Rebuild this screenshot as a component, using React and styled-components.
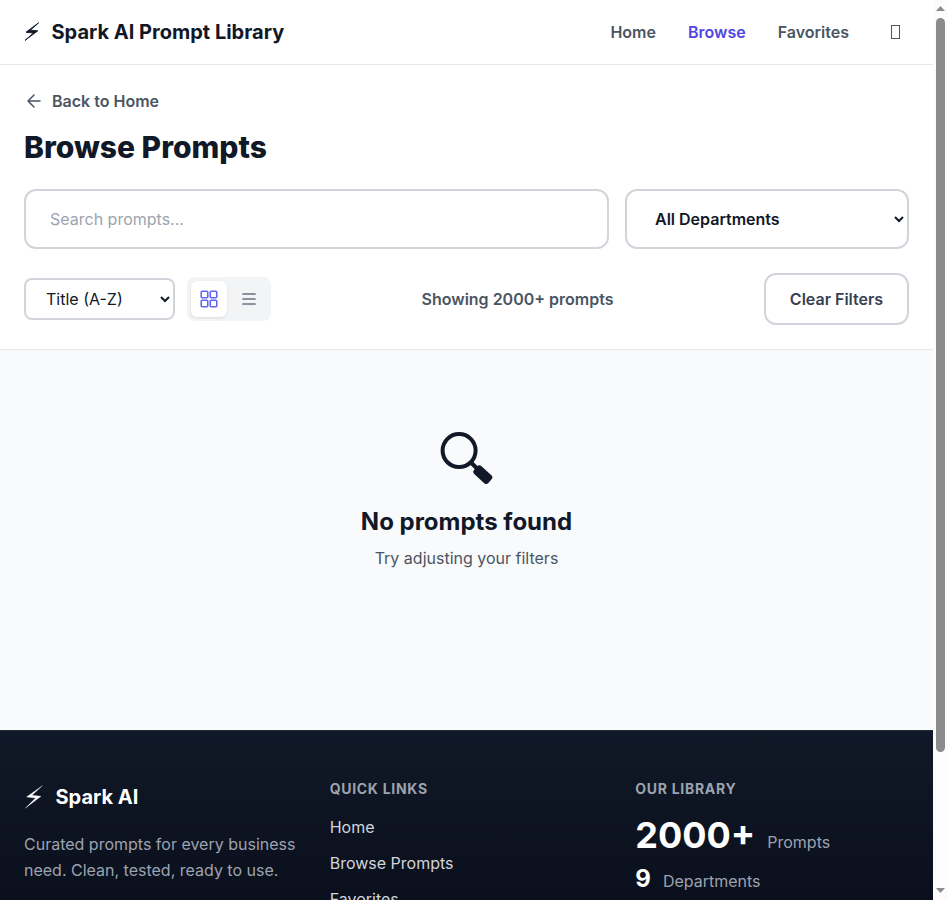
import React from 'react';
import styled, { createGlobalStyle } from 'styled-components';

const Global = createGlobalStyle`
  *, *::before, *::after { box-sizing: border-box; }
  html, body { margin: 0; padding: 0; overflow: hidden; }
  body { font-family: Inter, "Liberation Sans", sans-serif; font-size: 16px; line-height: 1.6; color: #111827; background: #f9fafb; }
  h1, h2, h3, p { margin: 0; }
  a { color: inherit; text-decoration: none; }
`;
const Viewport = styled.div`
  display: grid; grid-template-columns: 1fr 15px; height: 900px; overflow: hidden;
`;
const Page = styled.div`min-width: 0; height: 900px; overflow: hidden;`;
const Header = styled.header`
  height: 65px; padding: 0 24px; display: flex; align-items: center; justify-content: space-between;
  background: #fff; border-bottom: 1px solid #e5e7eb;
`;
const Brand = styled.a`
  display: flex; align-items: center; gap: 11.5px; font-size: 20px; font-weight: 700; line-height: 32px;
`;
const Nav = styled.nav`display: flex; align-items: center; gap: 32px;`;
const NavLink = styled.a`padding-top: 2px; font-weight: 600; color: ${p => (p.$active ? '#4f46e5' : '#4b5563')};`;
const ThemeButton = styled.button`
  width: 28px; height: 40px; padding: 0; border: 0; background: none; display: grid; place-items: center;
`;
const MissingGlyph = styled.span`width: 9px; height: 14px; border: 1px solid #4b5563;`;
const Controls = styled.section`
  height: 285px; padding: 24px 24px 0; background: #fff; border-bottom: 1px solid #e5e7eb;
`;
const BackLink = styled.a`
  display: inline-flex; align-items: center; gap: 8px; height: 26px; font-weight: 600; color: #4b5563;
  vertical-align: top;
  svg { margin-bottom: 2px; }
`;
const Title = styled.h1`
  margin-top: 14px; height: 36px; font-size: 30px; line-height: 36px; font-weight: 800;
`;
const SearchRow = styled.div`display: grid; grid-template-columns: 1fr 284px; gap: 16px; margin-top: 24px;`;
const SearchInput = styled.input`
  height: 60px; padding: 0 24px; border: 2px solid #d1d5db; border-radius: 12px; font: inherit; background: #fff;
  &::placeholder { color: #9ca3af; opacity: 1; }
`;
const Select = styled.select`
  width: ${p => p.$width}px; height: ${p => p.$height}px; padding: 0 0 0 ${p => p.$pad}px;
  border: 2px solid #d1d5db; border-radius: ${p => p.$radius}px; background: #fff; color: #111827;
  font: inherit; font-weight: ${p => p.$weight};
`;
const ToolRow = styled.div`display: flex; align-items: center; justify-content: space-between; margin-top: 24px; height: 52px;`;
const ToolGroup = styled.div`display: flex; align-items: center; gap: 12px;`;
const Toggle = styled.div`display: flex; gap: 4px; padding: 4px; border-radius: 8px; background: #f3f4f6;`;
const ToggleButton = styled.button`
  width: 36px; height: 36px; padding: 0; display: grid; place-items: center; border: 0; border-radius: 6px;
  color: ${p => (p.$active ? '#6366f1' : '#6b7280')};
  background: ${p => (p.$active ? '#fff' : 'transparent')};
  box-shadow: ${p => (p.$active ? '0 1px 3px rgba(0,0,0,.1)' : 'none')};
`;
const Count = styled.span`padding-top: 2px; font-weight: 600; color: #4b5563;`;
const ClearButton = styled.button`
  width: 145px; height: 52px; padding: 2px 0 0; border: 2px solid #d1d5db; border-radius: 12px; background: #fff;
  font: inherit; font-weight: 600; color: #374151;
`;
const Empty = styled.main`
  height: 380px; padding-top: 81px; display: flex; flex-direction: column; align-items: center; background: #f9fafb;
`;
const EmptyTitle = styled.h2`margin-top: 18px; font-size: 24px; line-height: 38px; font-weight: 700;`;
const EmptyText = styled.p`margin-top: 5px; color: #4b5563;`;
const Footer = styled.footer`
  height: 336px; padding: 47px 24px 0; border-top: 1px solid #1f2937;
  background: linear-gradient(180deg, #111827 0%, #030712 100%);
  display: grid; grid-template-columns: repeat(3, 1fr); gap: 32px; color: #fff;
`;
const Column = styled.div`min-width: 0;`;
const FooterBrand = styled(Brand)`height: 38px;`;
const Blurb = styled.p`margin-top: 16px; line-height: 25.6px; color: #9ca3af;`;
const Heading = styled.h3`
  font-size: 14px; line-height: 22px; font-weight: 700; letter-spacing: .7px; color: #9ca3af; text-transform: uppercase;
`;
const Links = styled.div`display: flex; flex-direction: column; gap: 10.4px; margin-top: 15px; color: #d1d5db;`;
const Stat = styled.div`display: flex; align-items: baseline; gap: 12px; color: #9ca3af; margin-top: ${p => p.$top}px;`;
const Figure = styled.strong`font-size: ${p => p.$size}px; line-height: ${p => p.$line}px; color: #fff; font-weight: 700;`;
const Scrollbar = styled.div`
  display: flex; flex-direction: column; align-items: center; justify-content: space-between; background: #fcfcfc; height: 900px;
`;
const Thumb = styled.div`width: 9px; height: 734px; margin-bottom: auto; border-radius: 5px; background: #8b8b8b;`;
const Arrow = styled.svg`display: block; width: 15px; height: 18px; fill: #8b8b8b;`;

const HeaderBolt = () => (
  <svg width="16" height="24" viewBox="0 0 16 24" fill="currentColor" stroke="currentColor" strokeWidth="0.9" strokeLinejoin="round">
    <path d="M14.6 2.8L2 12.2L9.4 13.1L1 20.4L13.8 10.8L6.3 10.2Z" />
  </svg>
);
const FooterBolt = () => (
  <svg width="20" height="28" viewBox="0 0 20 28" fill="currentColor" stroke="currentColor" strokeWidth="0.3">
    <path d="M18.3 2.8L2.5 14L11.6 15.1L1.3 25.2L17 13.3L8 12.2Z" />
  </svg>
);
const GridIcon = () => (
  <svg width="20" height="20" viewBox="0 0 20 20" fill="none" stroke="currentColor" strokeWidth="1.6">
    <rect x="2.25" y="2.25" width="6.5" height="6.5" rx="1" /><rect x="11.25" y="2.25" width="6.5" height="6.5" rx="1" />
    <rect x="2.25" y="11.25" width="6.5" height="6.5" rx="1" /><rect x="11.25" y="11.25" width="6.5" height="6.5" rx="1" />
  </svg>
);
const ListIcon = () => (
  <svg width="20" height="20" viewBox="0 0 20 20" fill="none" stroke="currentColor" strokeWidth="1.7" strokeLinecap="round">
    <path d="M4 5h12M4 10h12M4 15h12" />
  </svg>
);
const BackIcon = () => (
  <svg width="20" height="20" viewBox="0 0 20 20" fill="none" stroke="currentColor" strokeWidth="1.5" strokeLinecap="round" strokeLinejoin="round">
    <path d="M16 10H4M10 16L4 10L10 4" />
  </svg>
);
const SearchIcon = () => (
  <svg width="55" height="54" viewBox="0 0 55 54" fill="none" stroke="#111827">
    <circle cx="20.1" cy="19.6" r="16.5" strokeWidth="4" />
    <path d="M31.5 31L39 38.5" strokeWidth="4" />
    <path d="M40.3 37.2L50.4 46.4L47.2 50L37.2 40.8Z" fill="#111827" strokeWidth="5.8" strokeLinejoin="round" />
  </svg>
);

export default function App() {
  return (
    <Viewport>
      <Global />
      <Page>
        <Header>
          <Brand href="#"><HeaderBolt />Spark AI Prompt Library</Brand>
          <Nav>
            <NavLink href="#">Home</NavLink>
            <NavLink href="#" $active>Browse</NavLink>
            <NavLink href="#">Favorites</NavLink>
            <ThemeButton aria-label="Toggle theme"><MissingGlyph /></ThemeButton>
          </Nav>
        </Header>
        <Controls>
          <BackLink href="#"><BackIcon />Back to Home</BackLink>
          <Title>Browse Prompts</Title>
          <SearchRow>
            <SearchInput placeholder="Search prompts..." />
            <Select $width={284} $height={60} $pad={24} $radius={12} $weight={600}><option>All Departments</option></Select>
          </SearchRow>
          <ToolRow>
            <ToolGroup>
              <Select $width={151} $height={42} $pad={16} $radius={8} $weight={400}><option>Title (A-Z)</option></Select>
              <Toggle>
                <ToggleButton $active><GridIcon /></ToggleButton>
                <ToggleButton><ListIcon /></ToggleButton>
              </Toggle>
            </ToolGroup>
            <Count>Showing 2000+ prompts</Count>
            <ClearButton>Clear Filters</ClearButton>
          </ToolRow>
        </Controls>
        <Empty>
          <SearchIcon />
          <EmptyTitle>No prompts found</EmptyTitle>
          <EmptyText>Try adjusting your filters</EmptyText>
        </Empty>
        <Footer>
          <Column>
            <FooterBrand href="#"><FooterBolt />Spark AI</FooterBrand>
            <Blurb>Curated prompts for every business need. Clean, tested, ready to use.</Blurb>
          </Column>
          <Column>
            <Heading>Quick Links</Heading>
            <Links><a href="#">Home</a><a href="#">Browse Prompts</a><a href="#">Favorites</a></Links>
          </Column>
          <Column>
            <Heading>Our Library</Heading>
            <Stat $top={15}><Figure $size={36} $line={40}>2000+</Figure>Prompts</Stat>
            <Stat $top={4}><Figure $size={24} $line={38}>9</Figure>Departments</Stat>
          </Column>
        </Footer>
      </Page>
      <Scrollbar>
        <Arrow viewBox="0 0 15 18"><path d="M3 11L7.5 6L12 11Z" /></Arrow>
        <Thumb />
        <Arrow viewBox="0 0 15 18"><path d="M3 6L7.5 11L12 6Z" /></Arrow>
      </Scrollbar>
    </Viewport>
  );
}
